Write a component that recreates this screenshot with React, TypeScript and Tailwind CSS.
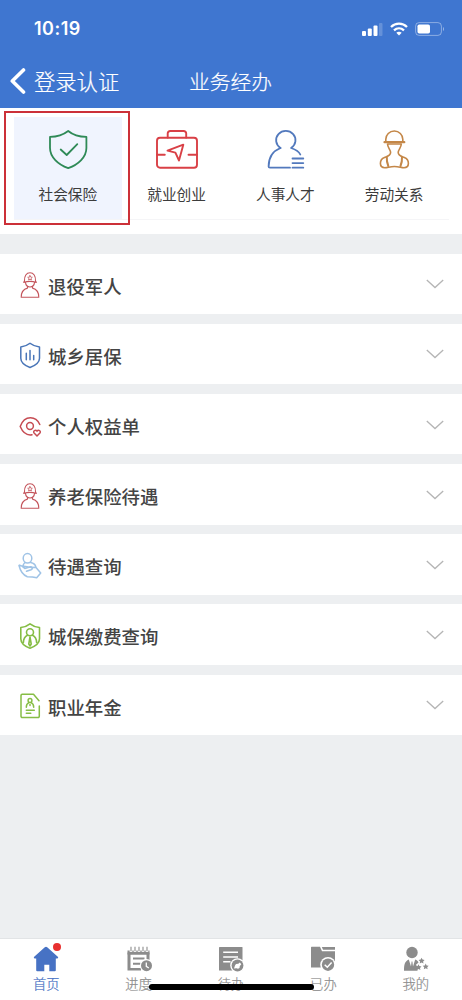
import React, { useState } from 'react';

type IconProps = { className?: string };

/* ---------- Category icons ---------- */

const ShieldCheckIcon = () => (
  <svg width="42" height="40" viewBox="-1 0 42 40" fill="none" stroke="#2f8a57" strokeWidth="1.8" strokeLinecap="round" strokeLinejoin="round">
    <path d="M20.2 1C15 5 9 6.8 2 6.9V18c0 9 8 16.4 18.2 20.2C30.5 34.4 38.4 27 38.4 18V6.9C31 6.8 25 5 20.2 1Z" />
    <path d="M12.7 19.5l6 5.5L29.3 14.2" />
  </svg>
);

const BriefcaseIcon = () => (
  <svg width="42" height="40" viewBox="0 0 42 40" fill="none" stroke="#d94046" strokeWidth="1.9" strokeLinecap="round" strokeLinejoin="round">
    <rect x="1" y="7.8" width="40" height="30" rx="3" />
    <path d="M11.7 7.5V3.500a2.500 2.500 0 0 1 2.500-2.500h13.500a2.500 2.500 0 0 1 2.500 2.500v4" />
    <path d="M1 24.700h7.800M32.500 24.700h8.500" />
    <path d="M11.500 20.700l15.800-6-4.300 15.800-3.600-7.900z" />
  </svg>
);

const PersonListIcon = () => (
  <svg width="42" height="40" viewBox="-2 0 42 40" fill="none" stroke="#5279bd" strokeWidth="1.8" strokeLinecap="round" strokeLinejoin="round">
    <path d="M14.500 18a9.700 9.300 0 1 1 10.600 0C30 19.600 33 21.500 34.300 24.500" />
    <path d="M14.500 18C5.800 21.500 2.600 28 2.600 36.500q0 1.200 1.400 1.200h20" />
    <path d="M26.500 28.500h10.800M26.500 33.100h10.800M26.500 37.700h10.800" />
  </svg>
);

const WorkerIcon = () => (
  <svg width="42" height="40" viewBox="-6 0 42 40" fill="none" stroke="#c48748" strokeWidth="1.6" strokeLinecap="round" strokeLinejoin="round">
    <path d="M6.800 11V9.300c0-4.500 3.700-8.300 8.500-8.300s8.500 3.800 8.500 8.300V11" />
    <path d="M5.500 12.200h19.800" strokeWidth="2.200" />
    <path d="M8.500 14c.2 4 3 5.500 3.100 8.500 0 3.200-3 3.700-6.100 4.900-5.500 2.200-5.500 10.300.3 10.300 3 0 5-1.200 9.600-1.200s6.600 1.200 9.600 1.200c5.800 0 5.800-8.100.3-10.300-3.100-1.200-6.100-1.700-6.100-4.900.1-3 2.900-4.500 3.100-8.500z" />
    <path d="M7.800 27c-.2 3.500.2 6 1.500 9M23 27c.2 3.500-.2 6-1.500 9" strokeWidth="2" />
  </svg>
);

/* ---------- List icons ---------- */

const SoldierIcon = () => (
  <svg width="24" height="28" viewBox="0 0 24 28" fill="none" stroke="#c4555c" strokeWidth="1.100" strokeLinejoin="round" strokeLinecap="round">
    <path d="M6.500 9.800C6.300 5 8.300 1.800 12 1.800s5.700 3.200 5.500 8l.8 1.600c-4-1.300-8.600-1.300-12.600 0z" />
    <path d="M12 4.600l.7 1.500 1.600.2-1.200 1.100.3 1.600-1.400-.8-1.400.8.300-1.600-1.200-1.100 1.600-.2z" strokeWidth=".8" />
    <path d="M7.500 11.400c.2 2.500 1.200 4.600 4.500 4.600s4.300-2.100 4.500-4.600" />
    <path d="M9.500 15.200v1.900c-4 1-6.300 4.400-6.300 9.100h17.600c0-4.700-2.300-8.100-6.300-9.100v-1.900" />
  </svg>
);

const ShieldChartIcon = () => (
  <svg width="24" height="28" viewBox="0 0 24 28" fill="none" stroke="#4a76b8" strokeWidth="1.500" strokeLinecap="round" strokeLinejoin="round">
    <path d="M12 2.300C9.500 4.400 6.500 5.500 2.800 5.900v11.300c0 4.500 4 7.300 9.200 9.300 5.200-2 9.500-4.800 9.500-9.300V5.900C17.700 5.500 14.500 4.400 12 2.300Z" />
    <path d="M8.300 12.200v6.500M12 9.500v9.200M15.700 14.500v4.200" />
  </svg>
);

const EyeHeartIcon = () => (
  <svg width="24" height="28" viewBox="0 0 24 28" fill="none" stroke="#c64c53" strokeWidth="1.500" strokeLinecap="round" strokeLinejoin="round">
    <path d="M14 22.800C8.500 23.800 4.500 19.800 2.200 14.500 4.200 9 8 5.800 12.500 5.800c4 0 7.300 2.400 9.300 6.700" />
    <circle cx="12" cy="14" r="3.400" />
    <path d="M19 24l-2.900-3c-1.500-2 1.400-3.900 2.900-1.900 1.500-2 4.400-.1 2.900 1.900z" />
  </svg>
);

const HandPersonIcon = () => (
  <svg width="24" height="28" viewBox="0 0 24 28" fill="none" stroke="#9fc3e6" strokeWidth="1.500" strokeLinecap="round" strokeLinejoin="round">
    <ellipse cx="9.500" cy="6.300" rx="4.300" ry="4.800" />
    <path d="M12.500 10.500c3 .6 5 2 5.300 4.500M7 10.500c-1.500 1-2 2.300-2 4" />
    <path d="M1 13.500c1.500-1.200 3.300.8 5.800 3l5.700-1.700c2.200-.4 2.600 2 .6 2.900l-4.600 1.600M13.700 15.500l4.100-.2 4.900 5.700-4 4.700-4.200-.7-5.200-.3C5 23 2.200 18.500 1 13.500Z" />
  </svg>
);

const ShieldPersonIcon = () => (
  <svg width="24" height="28" viewBox="0 0 24 28" fill="none" stroke="#86bd45" strokeWidth="1.600" strokeLinecap="round" strokeLinejoin="round">
    <path d="M12 1.900C9.500 4 6.500 5.100 2.800 5.500v11.300c0 4.500 4 7.500 9.200 9.500 5.200-2 9.500-5 9.500-9.500V5.500C17.700 5.100 14.500 4 12 1.900Z" />
    <circle cx="12" cy="10.300" r="3.500" />
    <path d="M9.500 13.200c-2.800 1.200-4 3.600-4.100 7.300M14.500 13.200c2.800 1.200 4 3.600 4.100 7.300" />
    <path d="M12 15l-1.200 7 1.200 2 1.200-2z" />
  </svg>
);

const DocumentPersonIcon = () => (
  <svg width="24" height="28" viewBox="0 0 24 28" fill="none" stroke="#86bd45" strokeWidth="1.500" strokeLinecap="round" strokeLinejoin="round">
    <path d="M21.300 14v10.300a1.200 1.200 0 0 1-1.200 1.200H4.200A1.200 1.200 0 0 1 3 24.300V3.500a1.200 1.200 0 0 1 1.200-1.200h11.300l5.500 6.500" />
    <ellipse cx="12" cy="8.500" rx="1.900" ry="2.100" />
    <path d="M8.300 15.300c0-2.500 1-3.800 2.500-4.600M15.700 15.300c0-2.500-1-3.800-2.500-4.600M12 12.500v1M8.300 18.300h8M8.300 21.300h4.500" />
  </svg>
);

/* ---------- Tab bar icons ---------- */

const HomeIcon = () => (
  <svg width="26" height="26" viewBox="0 0 26 26" fill="currentColor">
    <path d="M11.800 1.200a1.800 1.800 0 0 1 2.400 0l10.600 9.600c.7.700.4 1.700-.6 1.700h-1.400v11.800a1 1 0 0 1-1 1h-5.500v-6.500h-5v6.500H4.200a1 1 0 0 1-1-1V12.500H1.800c-1 0-1.300-1-.6-1.700z" />
  </svg>
);

const ProgressIcon = () => (
  <svg width="26" height="26" viewBox="0 0 26 26" fill="currentColor">
    <path d="M1.500 4.500h22v4h-22zM1.500 8h3v16.500h-3zM20.500 8h3v6h-3zM1.500 22h13.500v2.500H1.500z" />
    <path d="M5 1v5M9 1v5M13 1v5M17 1v5M21 1v5" stroke="#fff" strokeWidth="2.600" />
    <path d="M5 .8v4.500M9 .8v4.500M13 .8v4.500M17 .8v4.500M21 .8v4.500" stroke="currentColor" strokeWidth="1.100" />
    <path d="M1.500 6.500h22v2h-22zM7 11.500h11.500v2H7zM7 16.800h7.500v2H7z" />
    <circle cx="20.500" cy="19.700" r="6.600" fill="#fff" />
    <circle cx="20.500" cy="19.700" r="5.500" />
    <path d="M20.300 16.500v3.800l2.500 1.700" fill="none" stroke="#fff" strokeWidth="1.300" />
  </svg>
);

const TodoIcon = () => (
  <svg width="26" height="26" viewBox="0 0 26 26" fill="currentColor">
    <path d="M1 1.500a.6.600 0 0 1 .6-.6h22.300a.6.600 0 0 1 .6.600V24.500H1z" />
    <path d="M5.200 6.300h14.800M5.200 11h14.800M5.200 15.700h7.300" stroke="#fff" strokeWidth="1.500" />
    <circle cx="19.500" cy="19.500" r="7.300" fill="#fff" />
    <circle cx="19.500" cy="19.500" r="5.900" />
    <path d="M16 22.500l1-3 1-1.500 2.300-.3 1.500-1.200 1.500 1.800-1.500 1.700-.3 2-1.500.8-1.500-.5z" fill="#fff" />
  </svg>
);

const DoneIcon = () => (
  <svg width="26" height="26" viewBox="0 0 26 26" fill="currentColor">
    <path d="M1 1.400a.6.600 0 0 1 .6-.6H10l2 4.500h13V21.500H1z" />
    <path d="M11.800 1h13.200v2.800H13z" />
    <circle cx="18" cy="18.700" r="7.800" fill="#fff" />
    <circle cx="18" cy="18.700" r="6.200" />
    <path d="M14.700 18.700l2.600 2.500 4.300-4.700" fill="none" stroke="#fff" strokeWidth="1.500" />
  </svg>
);

const ProfileIcon = () => (
  <svg width="26" height="26" viewBox="0 0 26 26" fill="currentColor">
    <circle cx="9" cy="6.500" r="5.700" />
    <path d="M1 24.700c0-6 .7-9.500 4.800-11.300L8 20.500l.6-5h.8l.6 5 2.200-7.100c1.700.6 2.800 1.500 3.300 3l-2.500 2.300 1.500 2.500v3.500z" />
    <path d="M18.600 11.700l.9 1.900 2.100.3-1.500 1.500.4 2.100-1.900-1-1.900 1 .4-2.100-1.500-1.500 2.100-.3zM15.500 18.200l.9 1.900 2.100.3-1.500 1.500.4 2.100-1.900-1-1.900 1 .4-2.100-1.500-1.500 2.100-.3zM22.700 17.500l.9 1.900 2.100.3-1.500 1.500.4 2.100-1.900-1-1.900 1 .4-2.100-1.500-1.500 2.100-.3z" />
  </svg>
);

const ChevronDown = ({ className }: IconProps) => (
  <svg className={className} width="18" height="10" viewBox="0 0 18 10" fill="none" stroke="#b5b5b5" strokeWidth="1.300">
    <path d="M.8 1L9 8.600 17.200 1" />
  </svg>
);

const categories = [
  { id: 'insurance', label: '社会保险', icon: ShieldCheckIcon },
  { id: 'employment', label: '就业创业', icon: BriefcaseIcon },
  { id: 'talent', label: '人事人才', icon: PersonListIcon },
  { id: 'labor', label: '劳动关系', icon: WorkerIcon },
];

const services = [
  { label: '退役军人', icon: SoldierIcon },
  { label: '城乡居保', icon: ShieldChartIcon },
  { label: '个人权益单', icon: EyeHeartIcon },
  { label: '养老保险待遇', icon: SoldierIcon },
  { label: '待遇查询', icon: HandPersonIcon },
  { label: '城保缴费查询', icon: ShieldPersonIcon },
  { label: '职业年金', icon: DocumentPersonIcon },
];

const tabs = [
  { id: 'home', label: '首页', icon: HomeIcon, badge: true },
  { id: 'progress', label: '进度', icon: ProgressIcon },
  { id: 'todo', label: '待办', icon: TodoIcon },
  { id: 'done', label: '已办', icon: DoneIcon },
  { id: 'mine', label: '我的', icon: ProfileIcon },
];

function StatusBar() {
  return (
    <div className="flex h-[54px] items-center justify-between pl-[34px] pr-[17px] pt-[3px]">
      <span className="font-['Inter','Liberation_Sans',sans-serif] text-[18px] font-semibold leading-none tracking-[0.5px]">10:19</span>
      <div className="flex items-center gap-[7px]">
        <svg width="21" height="14" viewBox="0 0 21 14" fill="#fff">
          <rect x="0" y="9" width="4" height="5" rx="1" />
          <rect x="5.800" y="6.500" width="4" height="7.500" rx="1" />
          <rect x="11.500" y="3.500" width="4" height="10.500" rx="1" />
          <rect x="17" y="1" width="3.500" height="13" rx="1" opacity=".2" />
        </svg>
        <svg width="18" height="14" viewBox="0 0 18 14" fill="none" stroke="#fff" strokeWidth="2.300">
          <path d="M1 5c4.500-4.400 11.500-4.400 16 0M4 8.300c3-2.700 7-2.700 10 0" />
          <path d="M9 13.500l-2.700-2.700c1.600-1.300 3.800-1.300 5.400 0z" fill="#fff" stroke="none" />
        </svg>
        <svg width="30" height="14" viewBox="0 0 30 14" fill="none">
          <rect x=".6" y=".6" width="25.800" height="12.800" rx="3.500" stroke="#fff" strokeOpacity=".4" />
          <rect x="2.500" y="2.500" width="12.500" height="9" rx="1.800" fill="#fff" />
          <path d="M28 5v4c1.300-.6 1.300-3.400 0-4z" fill="#fff" fillOpacity=".5" />
        </svg>
      </div>
    </div>
  );
}

export default function App() {
  const [activeCategory, setActiveCategory] = useState('insurance');
  const [activeTab, setActiveTab] = useState('home');

  return (
    <div className="relative flex h-[1000px] w-[462px] flex-col overflow-hidden bg-[#edeff1] font-['Noto_Sans_CJK_SC',sans-serif]">
      {/* Header */}
      <header className="h-[108px] shrink-0 bg-[#3f76d0] text-white">
        <StatusBar />
        <div className="grid h-[54px] grid-cols-3 items-center">
          <button className="flex items-center pl-[10px]">
            <svg width="16" height="26" viewBox="0 0 16 26" fill="none" stroke="#fff" strokeWidth="3.600" strokeLinecap="round" strokeLinejoin="round">
              <path d="M13.500 2L2.300 13l11.200 11" />
            </svg>
            <span className="ml-[8px] whitespace-nowrap text-[21.3px] font-light leading-none [-webkit-text-stroke:0.2px]">登录认证</span>
          </button>
          <h1 className="pr-[1px] text-center text-[20.8px] font-light leading-none [-webkit-text-stroke:0.2px]">业务经办</h1>
        </div>
      </header>

      {/* Categories */}
      <section className="relative h-[126px] shrink-0 bg-white px-[13.5px] pt-[9px]">
        <div className="grid h-[103px] grid-cols-4 border-b border-[#f5f5f7]">
          {categories.map(({ id, label, icon: Icon }) => (
            <button
              key={id}
              onClick={() => setActiveCategory(id)}
              className={`flex flex-col items-center pt-[13px] ${activeCategory === id ? 'bg-[#f0f4fe]' : ''}`}
            >
              <Icon />
              <span className="mt-[17px] text-[14.7px] leading-none text-[#3c3c3c]">{label}</span>
            </button>
          ))}
        </div>
        <div className="pointer-events-none absolute left-[4px] top-[3px] h-[114px] w-[126px] border-2 border-[#cc3038]" />
      </section>

      {/* Services */}
      <ul className="mt-[19.5px] flex flex-col gap-[9.7px]">
        {services.map(({ label, icon: Icon }) => (
          <li key={label} className="flex h-[60.5px] items-center bg-white pl-[17.5px] pr-[18px]">
            <span className="pt-[3px]">
              <Icon />
            </span>
            <span className="ml-[6.5px] mt-[4px] text-[18.4px] font-medium leading-none text-[#444]">{label}</span>
            <ChevronDown className="ml-auto mt-[1px]" />
          </li>
        ))}
      </ul>

      {/* Tab bar */}
      <nav className="mt-auto grid h-[62px] shrink-0 grid-cols-5 border-t border-[#e2e4e6] bg-white">
        {tabs.map(({ id, label, icon: Icon, badge }) => (
          <button
            key={id}
            onClick={() => setActiveTab(id)}
            className={`flex flex-col items-center pt-[7px] ${activeTab === id ? 'text-[#4772c4]' : 'text-[#8c8c8c]'}`}
          >
            <span className="relative">
              <Icon />
              {badge && <span className="absolute -right-[2px] -top-[3px] size-[8px] rounded-full bg-[#e8302f]" />}
            </span>
            <span className="mt-[5px] text-[13.3px] font-light leading-none [-webkit-text-stroke:0.2px]">{label}</span>
          </button>
        ))}
      </nav>
      <div className="absolute left-[149px] top-[984px] h-[6px] w-[165px] rounded-full bg-black" />
    </div>
  );
}
